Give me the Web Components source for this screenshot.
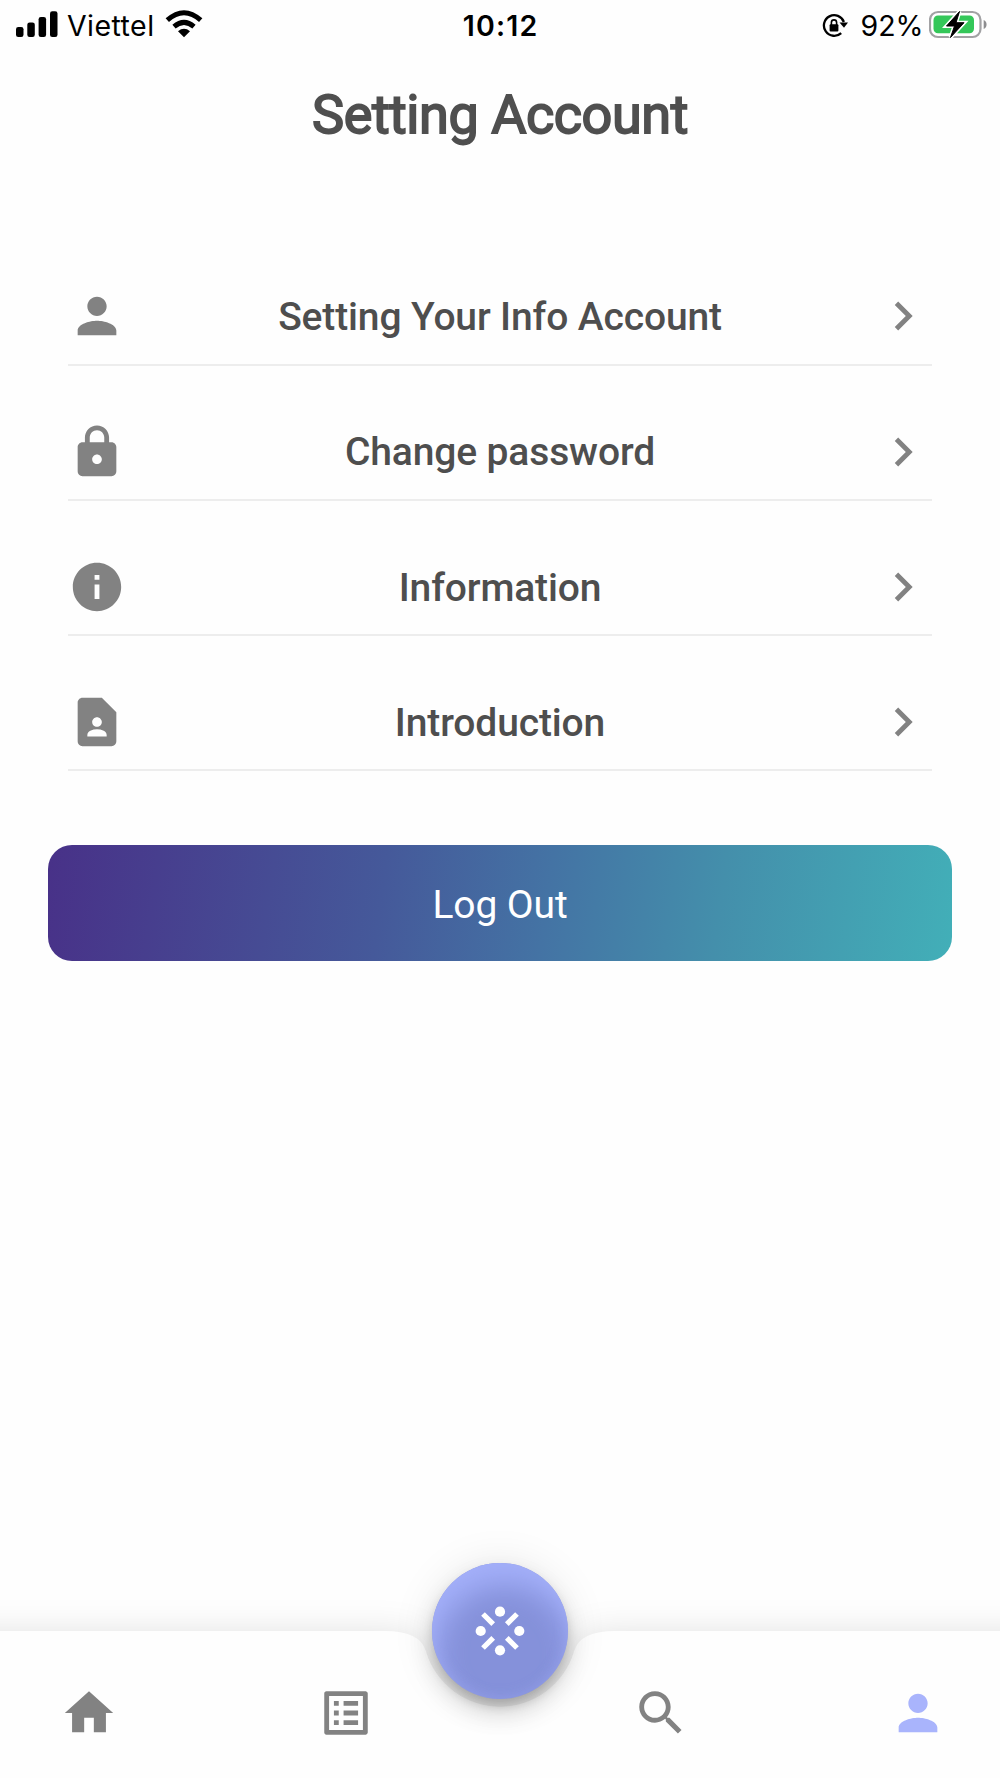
<!DOCTYPE html>
<html lang="en">
<head>
<meta charset="utf-8">
<title>Setting Account</title>
<style>
html,body{margin:0;background:#fefefe}
body{font-family:Roboto,"Liberation Sans",sans-serif}
</style>
</head>
<body>
<account-screen></account-screen>
<script>
const define=(name,html)=>customElements.define(name,class extends HTMLElement{
  connectedCallback(){
    if(this.shadowRoot)return;
    this.attachShadow({mode:'open'}).innerHTML=typeof html==='function'?html(this):html;
  }
});

const GLYPHS={
  person:'<path d="M12 12c2.21 0 4-1.79 4-4s-1.79-4-4-4-4 1.79-4 4 1.79 4 4 4zm0 2c-2.67 0-8 1.34-8 4v2h16v-2c0-2.66-5.33-4-8-4z"/>',
  lock:'<path d="M18 8h-1V6c0-2.76-2.24-5-5-5S7 3.24 7 6v2H6c-1.1 0-2 .9-2 2v10c0 1.1.9 2 2 2h12c1.1 0 2-.9 2-2V10c0-1.1-.9-2-2-2zm-6 9c-1.1 0-2-.9-2-2s.9-2 2-2 2 .9 2 2-.9 2-2 2zm3-9H9V6c0-1.66 1.34-3 3-3s3 1.34 3 3z"/>',
  info:'<path d="M12 2C6.48 2 2 6.48 2 12s4.48 10 10 10 10-4.48 10-10S17.52 2 12 2zm1 15h-2v-6h2v6zm0-8h-2V7h2v2z"/>',
  contact:'<path d="M14 2H6c-1.1 0-2 .9-2 2v16c0 1.1.9 2 2 2h12c1.1 0 2-.9 2-2V8zm-2 8c1.1 0 2 .9 2 2s-.9 2-2 2-2-.9-2-2 .9-2 2-2zm4 8H8v-.57c0-.81.48-1.53 1.22-1.85a6.95 6.95 0 0 1 5.56 0c.74.32 1.22 1.04 1.22 1.85z"/>',
  chevron:'<path d="M10 6 8.59 7.41 13.17 12l-4.58 4.59L10 18l6-6z"/>',
  home:'<path d="M10 20v-6h4v6h5v-8h3L12 3 2 12h3v8z"/>',
  list:'<path d="M19 5v14H5V5h14m1.1-2H3.9c-.5 0-.9.4-.9.9v16.2c0 .4.4.9.9.9h16.2c.4 0 .9-.5.9-.9V3.9c0-.5-.5-.9-.9-.9zM11 7h6v2h-6V7zm0 4h6v2h-6v-2zm0 4h6v2h-6zM7 7h2v2H7zm0 4h2v2H7zm0 4h2v2H7z"/>',
  search:'<path d="M15.5 14h-.79l-.28-.27C15.41 12.59 16 11.11 16 9.5 16 5.91 13.09 3 9.5 3S3 5.91 3 9.5 5.91 16 9.5 16c1.61 0 3.09-.59 4.23-1.57l.27.28v.79l5 4.99L20.49 19l-4.99-5zm-6 0C7.01 14 5 11.99 5 9.5S7.01 5 9.5 5 14 7.01 14 9.5 11.99 14 9.5 14z"/>'
};

define('ui-icon',el=>`<style>
:host{display:block;width:58px;height:58px;flex:none}
svg{display:block;width:100%;height:100%;fill:currentColor}
</style><svg viewBox="0 0 24 24">${GLYPHS[el.getAttribute('name')]}</svg>`);

define('status-bar',`<style>
:host{display:grid;grid-template-columns:1fr auto 1fr;align-items:center;height:51px;color:#000;font:400 28.500px/34px Inter,sans-serif}
.left,.right{display:flex;align-items:center}
.left{padding-left:16px}
.right{justify-content:flex-end;padding-right:12px}
svg{display:block;flex:none}
.carrier{margin:0 10.500px 0 9px;letter-spacing:.45px}
.time{font-weight:600;letter-spacing:1.200px;margin-right:-1.200px}
.pct{margin:0 5.500px 0 11px}
</style>
<div class="left">
<svg width="42" height="51" viewBox="0 0 42 51"><rect y="27" width="7.5" height="10" rx="2.3"/><rect x="11.3" y="22.5" width="7.5" height="14.5" rx="2.3"/><rect x="22.6" y="17" width="7.5" height="20" rx="2.3"/><rect x="34" y="11.3" width="7.5" height="25.7" rx="2.3"/></svg>
<span class="carrier">Viettel</span>
<svg width="38" height="51" viewBox="-19 0 38 51"><path d="M0 37.2-6 31.2Q0 26.500 6 31.200Z"/><g fill="none" stroke="#000" stroke-width="5"><path d="M-10 26.700Q0 18.200 10 26.700"/><path d="M-16.700 20.200Q0 5.300 16.700 20.200"/></g></svg>
</div>
<span class="time">10:12</span>
<div class="right">
<svg width="27" height="51" viewBox="0 0 27 51"><path d="M19.200 33.100A10.300 10.300 0 1 1 21.900 22" fill="none" stroke="#000" stroke-width="2.300"/><path d="M17.500 22.500h8.500l-4 5.300z"/><rect x="7.600" y="24.300" width="8.800" height="7.200" rx="1"/><path d="M9.400 25v-2.500a2.600 2.600 0 0 1 5.200 0V25" fill="none" stroke="#000" stroke-width="1.600"/></svg>
<span class="pct">92%</span>
<svg width="59" height="51" viewBox="0 0 59 51"><rect x="1" y="12" width="50.500" height="25" rx="8" fill="#fff" stroke="#a2a2a4" stroke-width="2.200"/><rect x="4.500" y="15.500" width="40.500" height="17.800" rx="4.500" fill="#34c759"/><path d="M54.700 20c3.800 1.500 3.800 7.500 0 9z" fill="#8d8d8f"/><path d="M30.500 11.500 17.500 26h8l-4 11.500L35 22.700h-8z" stroke="#fff" stroke-width="4"/><path d="M30.500 11.500 17.500 26h8l-4 11.500L35 22.700h-8z" stroke="#000" stroke-width="1"/></svg>
</div>`);

define('page-title',`<style>
:host{display:block;padding-top:31px;text-align:center;font:400 54px/66px Roboto,sans-serif;color:#4f4f4f;-webkit-text-stroke:1.800px #4f4f4f;letter-spacing:-.45px}
</style><slot></slot>`);

define('setting-row',el=>`<style>
:host{display:flex;align-items:center;box-sizing:border-box;height:135.200px;padding:39px 0 0;border-bottom:2px solid #ededed;color:#828282}
.label{flex:1;padding-top:1.500px;text-align:center;font:500 39px/58px Roboto,sans-serif;color:#4e4e4e;letter-spacing:-.14px}
</style><ui-icon name="${el.getAttribute('icon')}"></ui-icon><span class="label"><slot></slot></span><ui-icon name="chevron"></ui-icon>`);

define('gradient-button',`<style>
:host{display:block;margin:74px 48px 0}
button{display:block;width:904px;height:116px;border:0;border-radius:24px;padding:5px 0 0;background:linear-gradient(98deg,#483188 0%,#45599a 37%,#4473a4 55%,#448fab 74%,#42afb8 100%);color:#fff;font:400 39px/111px Roboto,sans-serif;letter-spacing:-.1px}
</style><button><slot></slot></button>`);

define('center-action',`<style>
:host{display:block;width:136px;height:136px;border-radius:50%;background:#8591da;box-shadow:inset 5px 22px 28px #a3aff9,inset 0 0 14px rgba(163,175,250,.35),0 7px 12px -2px rgba(0,0,0,.2),0 14px 24px rgba(0,0,0,.14),0 2px 43px rgba(0,0,0,.1)}
svg{display:block}
</style><svg width="136" height="136" viewBox="-68 -68 136 136" fill="#fff"><circle cy="-19.300" r="5.100"/><circle cy="19.300" r="5.100"/><circle cx="-19.300" r="5.100"/><circle cx="19.300" r="5.100"/><path d="M6.800-6.800 17-17M6.800 6.800 17 17M-6.800-6.800-17-17M-6.800 6.800-17 17" stroke="#fff" stroke-width="5.200"/></svg>`);

define('bottom-nav',`<style>
:host{display:block;position:relative;height:147px}
.bar{position:absolute;inset:0;overflow:visible;filter:drop-shadow(0 2px 17px rgba(0,0,0,.12))}
center-action{position:absolute;left:432px;top:-68px}
nav{position:relative;display:flex;justify-content:space-between;align-items:center;box-sizing:border-box;padding:53px 53px 0 60px;color:#828282}
.pair{display:flex;gap:199px}
.active{color:#a9b4fc}
</style>
<svg class="bar" width="1000" height="147" viewBox="0 0 1000 147"><path fill="#fefefe" d="M-80 0H384Q420.200 0 425.800 20A77.300 77.300 0 0 0 574.200 20Q579.800 0 616 0H1080V220H-80Z"/></svg>
<center-action></center-action>
<nav><div class="pair"><ui-icon name="home"></ui-icon><ui-icon name="list"></ui-icon></div><div class="pair"><ui-icon name="search"></ui-icon><ui-icon class="active" name="person"></ui-icon></div></nav>`);

define('account-screen',`<style>
:host{display:flex;flex-direction:column;width:1000px;height:1778px;overflow:hidden;background:#fefefe}
section{margin:82.400px 68px 0}
bottom-nav{margin-top:auto}
</style>
<status-bar></status-bar>
<page-title>Setting Account</page-title>
<section>
<setting-row icon="person">Setting Your Info Account</setting-row>
<setting-row icon="lock">Change password</setting-row>
<setting-row icon="info">Information</setting-row>
<setting-row icon="contact">Introduction</setting-row>
</section>
<gradient-button>Log Out</gradient-button>
<bottom-nav></bottom-nav>`);
</script>
</body>
</html>
